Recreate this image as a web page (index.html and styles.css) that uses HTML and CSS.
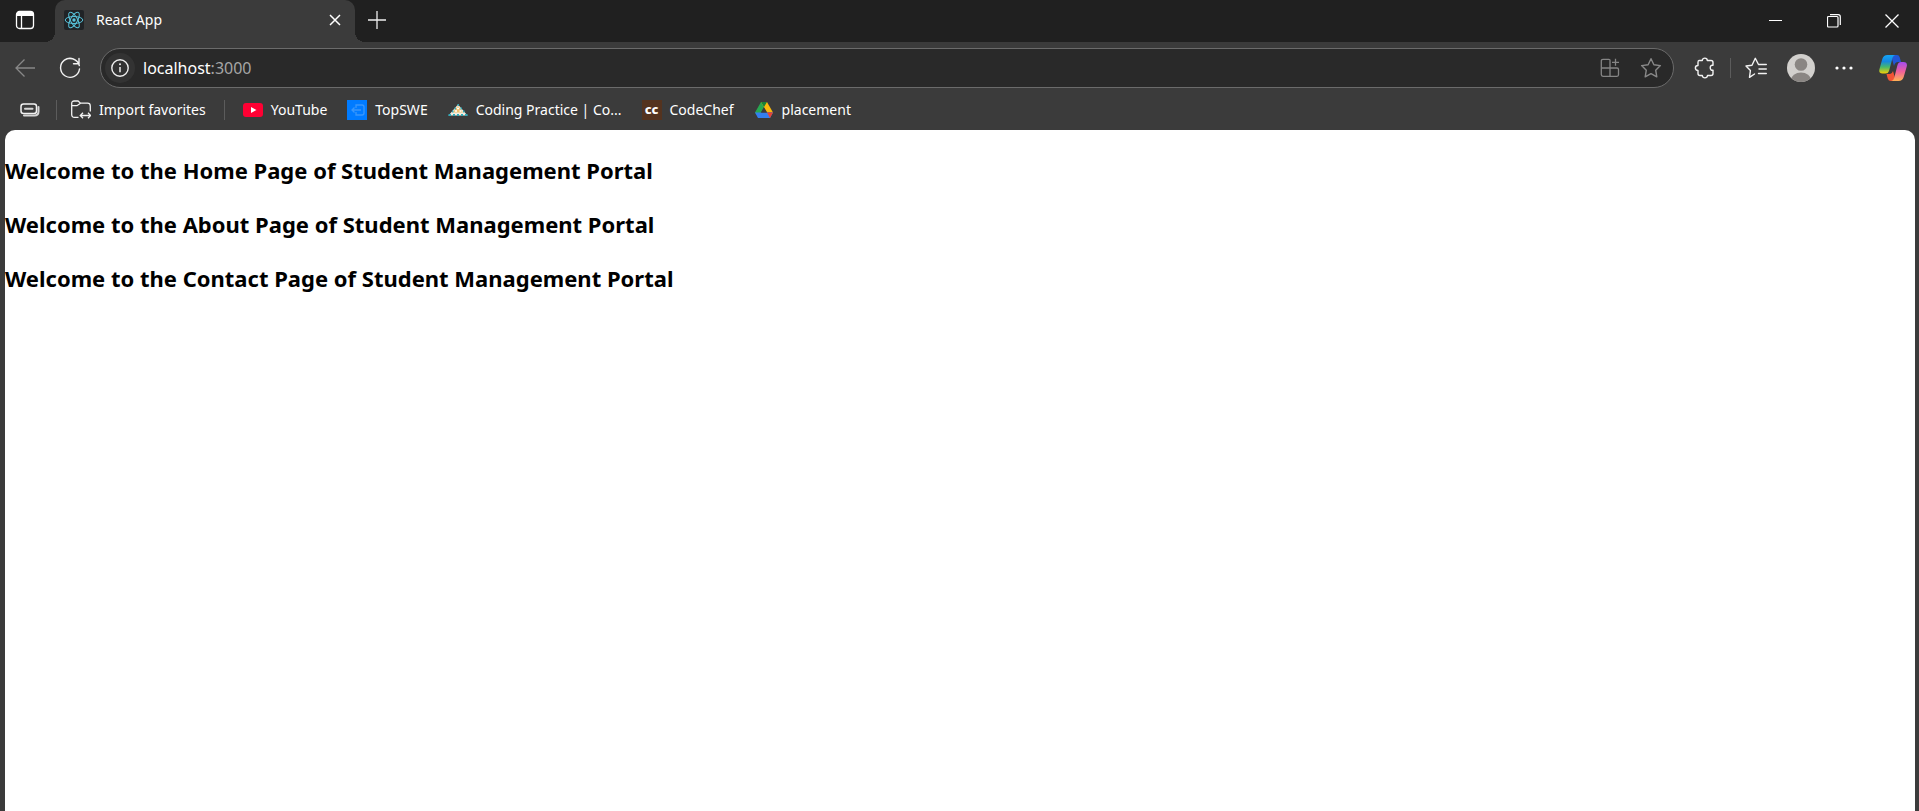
FILE: index.html
```html
<!DOCTYPE html>
<html lang="en">
<head>
<meta charset="utf-8">
<title>React App</title>
<link rel="stylesheet" href="styles.css">
</head>
<body>
<div class="browser">
  <header class="tabstrip">
    <button class="workspace" aria-label="Tab actions"><svg width="20" height="20" viewBox="0 0 20 20"><rect x="1.500" y="1.500" width="17" height="17" rx="3" fill="none" stroke="#fff" stroke-width="1.300"/><path d="M1.500 6V4.500Q1.500 1.500 4.500 1.500H15.500Q18.500 1.500 18.500 4.500V6Z" fill="#fff"/><path d="M6.500 6v12" stroke="#fff" stroke-width="1.300"/></svg></button>
    <div class="tab">
      <svg width="20" height="20" viewBox="0 0 20 20"><rect width="20" height="20" rx="2" fill="#202326"/><g fill="none" stroke="#58c4dc" stroke-width="1"><ellipse cx="10" cy="10" rx="8.800" ry="3.500"/><ellipse cx="10" cy="10" rx="8.800" ry="3.500" transform="rotate(60 10 10)"/><ellipse cx="10" cy="10" rx="8.800" ry="3.500" transform="rotate(120 10 10)"/></g><circle cx="10" cy="10" r="1.700" fill="#58c4dc"/></svg>
      <span class="tab-title">React App</span>
      <button class="tab-close" aria-label="Close tab"><svg width="12" height="12" viewBox="0 0 12 12"><path d="M1 1l10 10M11 1L1 11" stroke="#fff" stroke-width="1.500"/></svg></button>
    </div>
    <button class="new-tab" aria-label="New tab"><svg width="18" height="18" viewBox="0 0 18 18"><path d="M9 0v18M0 9h18" stroke="#eee" stroke-width="1.300"/></svg></button>
    <div class="window-controls">
      <button aria-label="Minimize"><svg width="14" height="14" viewBox="0 0 14 14"><path d="M0 6.500h13" stroke="#fff"/></svg></button>
      <button aria-label="Restore"><svg width="14" height="14" viewBox="0 0 14 14"><rect x=".5" y="2.500" width="10.500" height="10.500" rx="1" fill="none" stroke="#fff" stroke-width="1.200"/><path d="M3 .7h8.200Q13.300.7 13.300 2.800V11" fill="none" stroke="#fff" stroke-width="1.200"/></svg></button>
      <button aria-label="Close"><svg width="14" height="14" viewBox="0 0 14 14"><path d="M.5.5l13 13M13.500.5l-13 13" stroke="#fff" stroke-width="1.300"/></svg></button>
    </div>
  </header>

  <nav class="toolbar" aria-label="Navigation">
    <button class="nav-button" aria-label="Back"><svg width="20" height="20" viewBox="0 0 20 20"><path d="M20 10H1M9.500 1.500L1 10l8.500 8.500" fill="none" stroke="#888" stroke-width="1.300"/></svg></button>
    <button class="nav-button" aria-label="Refresh"><svg width="22" height="22" viewBox="0 0 22 22"><path d="M20.300 8.500A9.500 9.500 0 1 0 20.500 12M20 1.500V6.800H14.500M20 6.800Q16.500 1.500 11 1.500" fill="none" stroke="#f2f2f2" stroke-width="1.400" stroke-linecap="round"/></svg></button>
    <form class="address">
      <button class="site-info" type="button" aria-label="View site information"><svg width="18" height="18" viewBox="0 0 18 18"><circle cx="9" cy="9" r="8.200" fill="none" stroke="#eee" stroke-width="1.400"/><path d="M9 8v5.200" stroke="#eee" stroke-width="1.500"/><circle cx="9" cy="5.300" r="1" fill="#eee"/></svg></button>
      <div class="url" role="textbox" contenteditable="plaintext-only" aria-label="Address">localhost<span class="port">:3000</span></div>
      <button type="button" aria-label="App available"><svg width="20" height="20" viewBox="0 0 20 20"><path d="M10 18.300V2.500Q10 1.300 8.800 1.300H3Q1.300 1.300 1.300 3v13.500Q1.300 18.300 3 18.300H17Q18.500 18.300 18.500 16.800V11.500Q18.500 10 17 10H1.300M15.500 0.800V7.800M12 4.300h7" fill="none" stroke="#858585" stroke-width="1.300"/></svg></button>
      <button type="button" aria-label="Add to favorites"><svg width="22" height="22" viewBox="0 0 22 22"><path d="M11 1.700l2.900 6 6.500.9-4.700 4.600 1.100 6.600L11 16.700l-5.800 3.100 1.100-6.600L1.600 8.600l6.500-.9Z" fill="none" stroke="#898989" stroke-width="1.400" stroke-linejoin="round"/></svg></button>
    </form>
    <div class="actions">
      <button aria-label="Extensions"><svg width="22" height="22" viewBox="0 0 22 22"><path d="M5 3.500H8.300C8.300.3 13.300.3 13.300 3.500H17Q19 3.500 19 5.500V8.300C15.300 7.300 15.300 14.100 19 13.200V16.500Q19 18.500 17 18.500H13.500C13.300 21.700 8.300 21.700 8.300 18.500H6Q4 18.500 4 16.500V13.500C.5 13.500.5 8.500 4 8.500V5.500Q4 3.500 5 3.500Z" fill="none" stroke="#f2f2f2" stroke-width="1.400" stroke-linejoin="round"/></svg></button>
      <span class="divider"></span>
      <button aria-label="Favorites"><svg width="22" height="22" viewBox="0 0 22 22"><path d="M13.500 7.500H21.300M14 12h7.300M13.500 16.500H21.300M9.500 17l-5 3.300.9-6.800L1 9l6-.8L10.300 1.300l3.200 6.200" fill="none" stroke="#f2f2f2" stroke-width="1.400" stroke-linejoin="round" stroke-linecap="round"/></svg></button>
      <button class="profile" aria-label="Profile"><svg width="28" height="28" viewBox="0 0 28 28"><defs><clipPath id="avatar"><circle cx="14" cy="14" r="14"/></clipPath></defs><g clip-path="url(#avatar)"><path fill="#d2d0cd" d="M0 0h28v28H0z"/><circle cx="14" cy="10.500" r="6.300" fill="#8a8683"/><ellipse cx="14" cy="26" rx="10" ry="7.500" fill="#8a8683"/></g></svg></button>
      <button aria-label="Settings and more"><svg width="18" height="18" viewBox="0 0 18 18"><g fill="#fff"><circle cx="2" cy="9" r="1.600"/><circle cx="9" cy="9" r="1.600"/><circle cx="16" cy="9" r="1.600"/></g></svg></button>
      <button class="copilot" aria-label="Copilot"><svg width="28" height="28" viewBox="0 0 28 28"><defs><linearGradient id="ca" x2="0" y2="1"><stop stop-color="#14a5f5"/><stop offset=".35" stop-color="#1687e0"/><stop offset=".65" stop-color="#47b86b"/><stop offset="1" stop-color="#f5cf05"/></linearGradient><linearGradient id="cb" x2="0" y2="1"><stop stop-color="#a44cf0"/><stop offset=".5" stop-color="#f0609b"/><stop offset="1" stop-color="#ffb255"/></linearGradient></defs><path d="M14 1H18Q20 1 20.700 3.200L22 8H19Q16 8 15 12L13 5Z" fill="#2256d5"/><path d="M14 27h-2q-2.500 0-3.300-2.500L7.500 20H11q2 0 3-3l2 7Z" fill="#f25435"/><path d="M8.500 1H16.500Q14.300 1 13.500 4L10 17Q9.200 19.500 6.500 19.500H3.500Q-.7 19.500.5 15L3.300 5Q4.500 1 8.500 1Z" fill="url(#ca)"/><path d="M19.500 27H12.500Q14.500 26.500 15.300 23.500L18.500 11Q19.300 8 22 8h2.500Q29 8 27.600 13L24.700 23Q23.500 27 19.500 27Z" fill="url(#cb)"/></svg></button>
    </div>
  </nav>

  <nav class="favorites" aria-label="Favorites bar">
    <button class="tab-groups" aria-label="Tab groups"><svg width="20" height="16" viewBox="0 0 20 16"><rect x="1" y="2" width="15.500" height="9.500" rx="2.500" fill="none" stroke="#f2f2f2" stroke-width="1.500"/><path d="M5 6.700h7.500M4 13.500h10.500q4 0 4-4V5" fill="none" stroke="#d5d5d5" stroke-width="2" stroke-linecap="round"/></svg></button>
    <span class="divider"></span>
    <button class="favorite"><svg width="20" height="20" viewBox="0 0 20 20"><path d="M7.500 17.300H3.500Q.7 17.300.7 14.500V3.500Q.7 1 3.200 1H7L9.500 3.200H16.500Q19.300 3.200 19.300 6V11.500M.7 5.700H6L9.500 3.200" fill="none" stroke="#f2f2f2" stroke-width="1.300"/><path d="M9.500 15.500h10M12 12.800l-2.700 2.700 2.700 2.700M17 12.800l2.700 2.700-2.700 2.700" fill="none" stroke="#f2f2f2" stroke-width="1.300"/></svg>Import favorites</button>
    <span class="divider"></span>
    <div class="links">
      <a class="favorite" href="#"><svg width="20" height="20" viewBox="0 0 20 20"><rect y="3" width="20" height="14" rx="3" fill="#ff0033"/><path d="M8 7l5.500 3L8 13Z" fill="#fff"/></svg>YouTube</a>
      <a class="favorite" href="#"><svg width="20" height="20" viewBox="0 0 20 20"><path fill="#007bff" d="M0 0h20v20H0z"/><path d="M9 8V5h6q2 0 2 2v6q0 2-2 2H9v-3M5 10h9M7.500 7.500L5 10l2.500 2.500" fill="none" stroke="#3997fb" stroke-width="1.300"/></svg>TopSWE</a>
      <a class="favorite" href="#"><svg width="20" height="20" viewBox="0 0 20 20"><path d="M10 4.500L.5 15.500h19Z" fill="#f1eee2"/><path d="M10 6l3 3.500 2 3H5l2-3Z" fill="#f2c06f"/><path d="M9.500 5h1.500M6.500 8.500H8M12.500 8.500H14M4 11.500h1.500M15 11.500h1.500M.5 15h2.500M5 15h2M9 15h2M13 15h2M17 15h2.500" stroke="#32a9b7" stroke-width="2"/><path d="M9 8.500h2M7 11h2M11.500 11h2" stroke="#fff" stroke-width="1.500"/></svg>Coding Practice | Co...</a>
      <a class="favorite" href="#"><span class="chef-icon" aria-hidden="true">cc</span>CodeChef</a>
      <a class="favorite" href="#"><svg width="20" height="20" viewBox="0 0 20 20"><path d="M7 2h6l-3 5-5.500 10L1 12.500Z" fill="#28a850"/><path d="M7 2h6l6 10.500h-6Z" fill="#fbb90b"/><path d="M7 2h6l-3 5Z" fill="#188038"/><path d="M1 12.500h18L16 18H4Z" fill="#347fee"/><path d="M13 12.500h6L16 18Z" fill="#e94335"/><path d="M10 7.500l3 5H7Z" fill="#3b3b3b"/></svg>placement</a>
    </div>
  </nav>

  <main class="page">
    <h2>Welcome to the Home Page of Student Management Portal</h2>
    <h2>Welcome to the About Page of Student Management Portal</h2>
    <h2>Welcome to the Contact Page of Student Management Portal</h2>
  </main>
</div>
</body>
</html>
```
FILE: styles.css
```css
* { box-sizing: border-box; }
body {
  margin: 0;
  background: #3b3b3b;
  color: #fff;
  font: 14px/20px "Segoe UI", "Noto Sans", "Open Sans", sans-serif;
}
button {
  display: flex;
  align-items: center;
  justify-content: center;
  padding: 0;
  border: 0;
  background: none;
  color: inherit;
  font: inherit;
}
svg { display: block; flex: none; }
.browser { display: flex; flex-direction: column; min-height: 100vh; }

.tabstrip { display: flex; height: 42px; background: #202020; }
.workspace { width: 55px; padding: 0 5px 2px 0; }
.tab {
  position: relative;
  display: flex;
  align-items: center;
  gap: 12px;
  width: 300px;
  padding: 0 12px 2px 9px;
  border-radius: 10px 10px 0 0;
  background: #3b3b3b;
}
/* Concave feet where the tab meets the toolbar */
.tab::before, .tab::after {
  content: "";
  position: absolute;
  bottom: 0;
  width: 10px;
  height: 10px;
}
.tab::before { right: 100%; background: radial-gradient(circle at 0 0, transparent 10px, #3b3b3b 10px); }
.tab::after { left: 100%; background: radial-gradient(circle at 100% 0, transparent 10px, #3b3b3b 10px); }
.tab-title { flex: 1; }
.tab-close { width: 16px; height: 16px; }
.new-tab { width: 44px; padding-bottom: 3px; }
.window-controls { display: flex; margin-left: auto; }
.window-controls button { width: 58px; padding-left: 3px; }

.toolbar { display: flex; align-items: center; height: 52px; padding-right: 12px; }
.nav-button { width: 40px; height: 40px; }
.nav-button:first-child { width: 50px; }
.address {
  display: flex;
  align-items: center;
  flex: 1;
  gap: 20px;
  height: 40px;
  margin-left: 10px;
  padding: 0 11px 0 4px;
  border: 1px solid #6b6b6b;
  border-radius: 20px;
  background: #292929;
}
.site-info { width: 30px; height: 30px; border-radius: 50%; background: #333; }
.url { flex: 1; margin-left: -12px; font-size: 16px; line-height: 24px; }
.port { color: #a5a5a5; }
.actions { display: flex; align-items: center; gap: 14px; padding-left: 20px; }
.divider { width: 1px; height: 20px; background: #5c5c5c; }
.profile { margin: 0 6px; }
.copilot { margin-left: 12px; }

.favorites { display: flex; align-items: center; gap: 14px; height: 36px; padding: 0 20px 4px; }
.tab-groups { margin-right: 2px; }
.favorites .divider:nth-of-type(2) { margin: 0 4px; }
.links { display: flex; gap: 20px; }
.favorite { display: flex; align-items: center; gap: 8px; color: #fff; text-decoration: none; white-space: nowrap; }
.chef-icon {
  width: 20px;
  height: 20px;
  background: #54331f;
  font-size: 13px;
  font-weight: 800;
  line-height: 18px;
  text-align: center;
}

.page {
  display: flex;
  flex: 1;
  flex-direction: column;
  gap: 22px;
  margin: 0 4px 0 5px;
  padding-top: 24px;
  border-radius: 10px 10px 0 0;
  background: #fff;
  color: #000;
}
h2 { margin: 0; font-size: 22px; line-height: 32px; font-weight: 700; }
```
